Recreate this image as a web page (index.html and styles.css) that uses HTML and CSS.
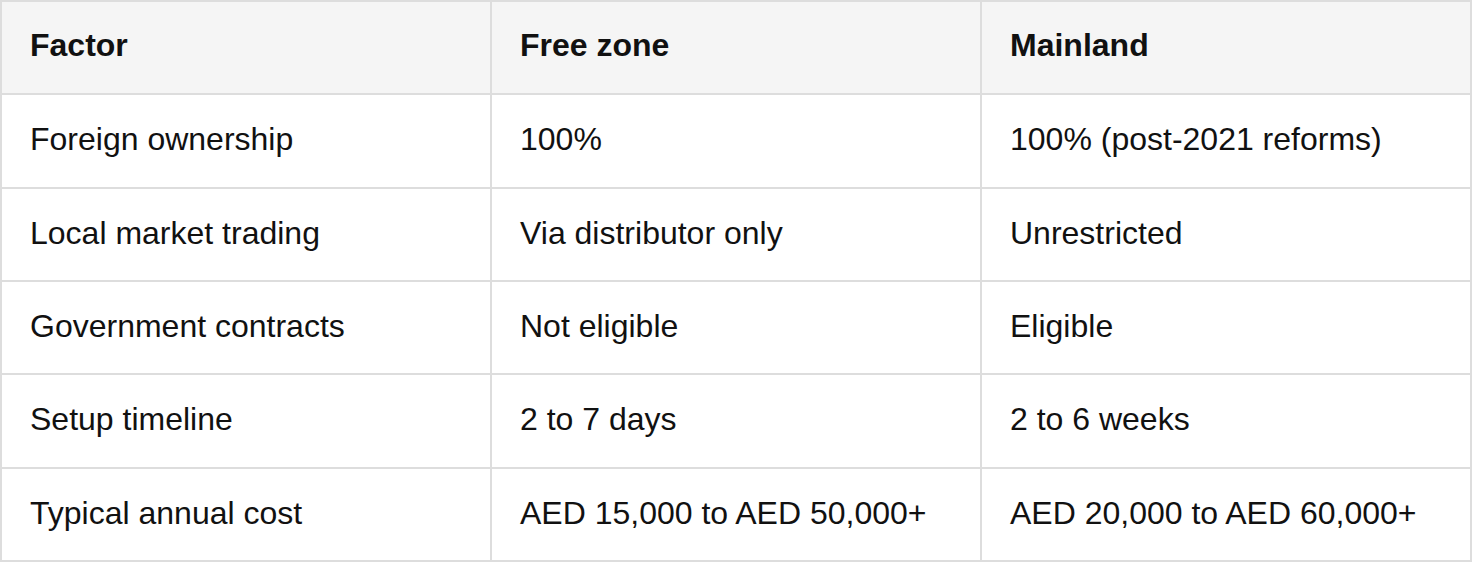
FILE: index.html
```html
<!DOCTYPE html>
<html lang="en">
<head>
<meta charset="utf-8">
<title>Free zone vs Mainland</title>
<link rel="stylesheet" href="styles.css">
</head>
<body>
<table class="compare">
  <thead>
    <tr><th>Factor</th><th>Free zone</th><th>Mainland</th></tr>
  </thead>
  <tbody>
    <tr><td>Foreign ownership</td><td>100%</td><td>100% (post-2021 reforms)</td></tr>
    <tr><td>Local market trading</td><td>Via distributor only</td><td>Unrestricted</td></tr>
    <tr><td>Government contracts</td><td>Not eligible</td><td>Eligible</td></tr>
    <tr><td>Setup timeline</td><td>2 to 7 days</td><td>2 to 6 weeks</td></tr>
    <tr><td>Typical annual cost</td><td>AED 15,000 to AED 50,000+</td><td>AED 20,000 to AED 60,000+</td></tr>
  </tbody>
</table>
</body>
</html>
```
FILE: styles.css
```css
html, body {
  margin: 0;
  padding: 0;
  background: #ffffff;
}
.compare {
  width: 1472px;
  border-collapse: collapse;
  table-layout: fixed;
  font-family: "Liberation Sans", Arial, sans-serif;
  font-size: 32px;
  color: #111111;
}
.compare th,
.compare td {
  border: 2px solid #dddddd;
  padding: 21px 28px 23px;
  line-height: 47.333px;
  text-align: left;
  vertical-align: middle;
}
.compare th {
  background: #f5f5f5;
  font-weight: bold;
  padding-top: 20px;
  padding-bottom: 24px;
}
```
